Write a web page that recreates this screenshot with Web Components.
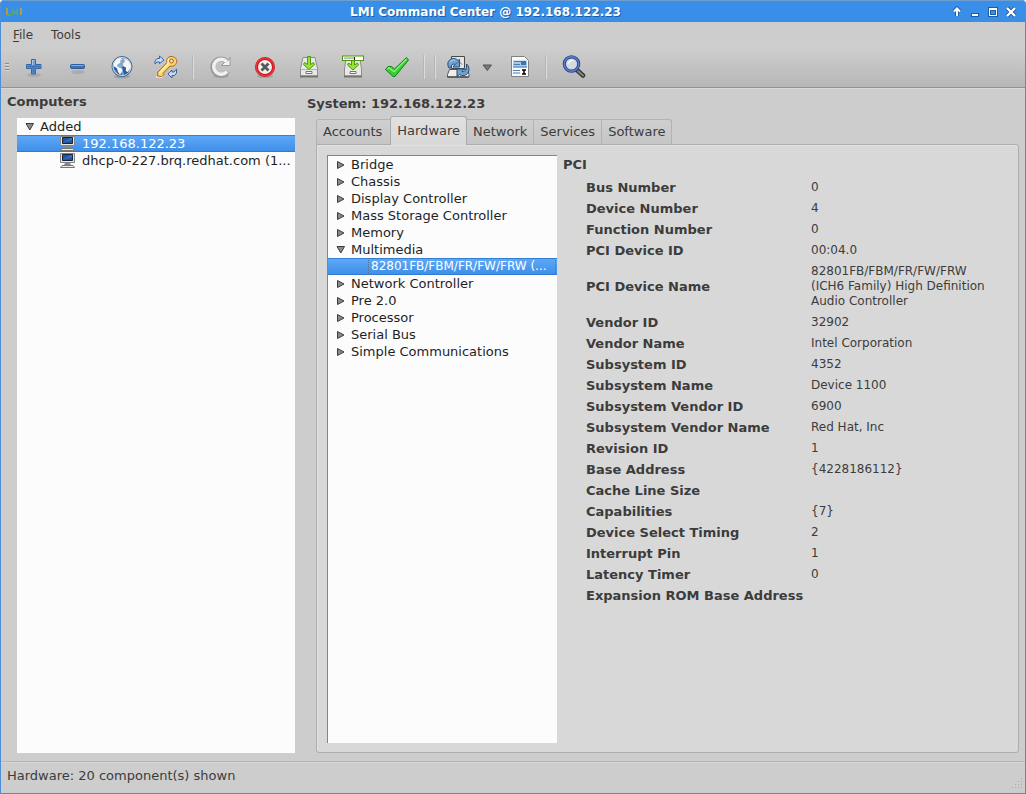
<!DOCTYPE html>
<html lang="en">
<head>
<meta charset="utf-8">
<title>LMI Command Center @ 192.168.122.23</title>
<style>
html, body { margin: 0; height: 100%; }
body { background: #fff; font: 13px/17px "DejaVu Sans", sans-serif; color: #3c3c3c; }
</style>
</head>
<body>
<lmi-window></lmi-window>

<template id="t-window">
<style>
:host { display: flex; flex-direction: column; height: 100vh; box-sizing: border-box; overflow: hidden; background: #cdcdcd; border: 1px solid #4c8fd8; border-top: 0; border-radius: 4px 4px 0 0; }
main { flex: 1; min-height: 0; display: flex; gap: 12px; padding: 0 6px 8px 6px; }
.side { flex: 0 0 288px; display: flex; flex-direction: column; }
.system { flex: 1; min-width: 0; display: flex; flex-direction: column; }
h1, h2 { margin: 0; font-size: 13px; line-height: 17px; font-weight: bold; }
.side h2 { padding: 5px 0 8px; }
.side tree-view { flex: 1; margin: 0 0 0 10px; }
h1 { padding: 7px 0 4px; }
</style>
<title-bar>LMI Command Center @ 192.168.122.23</title-bar>
<menu-bar></menu-bar>
<tool-bar></tool-bar>
<main>
<section class="side">
<h2>Computers</h2>
<tree-view aria-label="Computers">
<tree-row state="open">Added</tree-row>
<tree-row level="1" icon selected>192.168.122.23</tree-row>
<tree-row level="1" icon>dhcp-0-227.brq.redhat.com (1...</tree-row>
</tree-view>
</section>
<section class="system">
<h1>System: 192.168.122.23</h1>
<tab-panel></tab-panel>
</section>
</main>
<status-bar>Hardware: 20 component(s) shown</status-bar>
</template>

<template id="t-title">
<style>
:host { display: flex; align-items: center; flex: none; height: 22px; background: #398ee7; border-top: 1px solid #6f9fd0; box-sizing: border-box; padding: 0 5px 0 4px; }
.name { flex: 1; text-align: center; color: #fff; font-size: 12px; font-weight: bold; line-height: 22px; text-shadow: 1px 1px 0 #1c5da6; white-space: nowrap; overflow: hidden; }
svg { display: block; }
button { border: 0; padding: 0; margin: 0; background: none; width: 18px; height: 18px; display: grid; place-items: center; }
</style>
<svg width="18" height="10" viewBox="0 0 18 10" fill="none" stroke-width="2"><path d="M2 1v7" stroke="#b49a38"/><path d="M2 8h4M8 2v6" stroke="#58a874"/><path d="M8 3l2 3 2-3v5" stroke="#4aa2a0"/><path d="M16 1v7" stroke="#a8a04a"/></svg>
<span class="name"><slot></slot></span>
<button aria-label="Shade"><svg width="12" height="12" viewBox="0 0 12 12"><path d="M6 10V3M3 5.500l3-3 3 3" fill="none" stroke="#1c5da6" stroke-width="4"/><path d="M6 10V3M3 5.500l3-3 3 3" fill="none" stroke="#fff" stroke-width="2"/></svg></button>
<button aria-label="Minimize"><svg width="12" height="12" viewBox="0 0 12 12"><path d="M2 7h8v4H2z" fill="#1c5da6"/><path d="M3 8h6v2H3z" fill="#fff"/></svg></button>
<button aria-label="Maximize"><svg width="12" height="12" viewBox="0 0 12 12"><path d="M1 1h10v10H1z" fill="#1c5da6"/><path d="M2 2h8v8H2z" fill="#fff"/><path d="M3 4h6v5H3z" fill="#1c5da6"/><path d="M4 5h4v3H4z" fill="#398ee7"/></svg></button>
<button aria-label="Close"><svg width="12" height="12" viewBox="0 0 12 12"><path d="M2 2l8 8m0-8l-8 8" stroke="#1c5da6" stroke-width="4"/><path d="M2 2l8 8m0-8l-8 8" stroke="#fff" stroke-width="2.400"/></svg></button>
</template>

<template id="t-menu">
<style>
:host { display: flex; flex: none; height: 25px; padding: 0 5px; background: #cdcdcd; }
button { border: 0; background: none; font: inherit; font-size: 12px; color: inherit; padding: 1px 7px 0; margin: 0 4px 0 0; }
u { text-underline-offset: 2px; }
</style>
<button><u>F</u>ile</button>
<button>Tools</button>
</template>

<template id="t-toolbar">
<style>
:host { display: flex; flex: none; align-items: center; height: 41px; box-sizing: border-box; background: linear-gradient(#cecece, #b7b7b7); border-bottom: 1px solid #939393; box-shadow: 0 1px 0 #d8d8d8; }
.grip { width: 11px; flex: none; display: grid; place-items: center; }
.grip i { display: block; width: 4px; height: 9px; background: repeating-linear-gradient(#8b8b8b 0 1px, #d9d9d9 1px 2px, transparent 2px 3px); }
hr { flex: none; width: 1px; height: 24px; margin: 0 5px 0 4px; border: 0; border-right: 1px solid #dcdcdc; background: #b5b5b5; box-sizing: content-box; }
</style>
<span class="grip"><i></i></span>
<tool-button label="Add"><svg viewBox="0 0 24 24"><ellipse cx="12" cy="20" rx="7" ry="2" fill="#000" opacity=".1"/><path d="M9.500 4.500h4v5h5.500v4h-5.500v5.500h-4v-5.500H4.500v-4h5z" fill="#729fcf" stroke="#3465a4" stroke-linejoin="round"/><path d="M5.500 11.500h12.500M11.500 11v7" stroke="#3d72b5" stroke-width="2"/><path d="M10.500 10V5.500h2" fill="none" stroke="#a9c8ea"/></svg></tool-button>
<tool-button label="Remove"><svg viewBox="0 0 24 24"><ellipse cx="12" cy="17" rx="7" ry="2" fill="#000" opacity=".1"/><rect x="4.500" y="9.500" width="14" height="4" rx="1" fill="#3d72b5" stroke="#2f5f9f"/><path d="M5.500 10.500h12" stroke="#86afdf"/></svg></tool-button>
<tool-button label="Network"><svg viewBox="0 0 24 24"><ellipse cx="12" cy="21.500" rx="8" ry="2" fill="#000" opacity=".15"/><circle cx="12" cy="11.500" r="10" fill="#5d86b2" stroke="#47698f"/><circle cx="12" cy="11.500" r="9" fill="#88a9ca" stroke="#c9d8e8"/><path d="M4 12h6l2 8-4-1-4-5zM12 12l3-2 5 3-2 5-4 2z" fill="#2c5d97"/><path d="M3.500 9l3-5 4-1.500 1.500 2-2 1 .5 2-3 2-.5 2 3 1 2.500 2-1 3-1.500 2-2-2.500-1-3.500-2.500-2zM14 3.500l4 2 2.500 4 .3 3-2 3-1 1.500-2-1 .2-3.500-2.500-1-.5-3 2-2z" fill="#f4f6f5"/></svg></tool-button>
<tool-button label="Authentication"><svg viewBox="0 0 24 24"><path d="M3 20l-1.500 2.500 6 .5 3-3z" fill="#f2e3dc"/><path d="M17 1.500c4 0 6.500 3 5.500 6-1 3-4 4.500-6.500 3.500l-7 7.500 1 1-2.500 2-4-.5.500-4 9-9.500c-1-3 1-6 4-6z" fill="#fbd966" stroke="#b65b20" stroke-linejoin="round"/><path d="M14.500 4l-.5 5-9 9.500" fill="none" stroke="#fff0a0" stroke-width="1.500"/><circle cx="17.500" cy="6" r="2" fill="#ddd" stroke="#b65b20"/><path d="M1 9V6l2-2.500h2.500V1L10 5 5.500 8.500V7H3zM22.500 14v4l-2 2.500h-2.500V23l-4-4 4-4v2h2z" fill="#c9dcf2" stroke="#3c61a5" stroke-linejoin="round"/></svg></tool-button>
<hr>
<tool-button label="Refresh"><svg viewBox="0 0 24 24"><ellipse cx="12" cy="21" rx="8" ry="2" fill="#000" opacity=".12"/><path d="M18.500 16.500a8 8 0 1 1-1-10" fill="none" stroke="#999" stroke-width="5"/><path d="M21 2.500v8h-8.500l3-3 3-1z" fill="#f4f4f4" stroke="#999" stroke-linejoin="round"/><path d="M18 16.500a7.500 7.500 0 1 1 0-9.500" fill="none" stroke="#f1f1f1" stroke-width="3.500"/></svg></tool-button>
<tool-button label="Stop"><svg viewBox="0 0 24 24"><ellipse cx="12" cy="21" rx="8" ry="2" fill="#000" opacity=".14"/><circle cx="12" cy="12" r="8.500" fill="#f0f0ee" stroke="#c41219" stroke-width="3"/><circle cx="12" cy="12" r="8.800" fill="none" stroke="#ed353c" stroke-width="1.600"/><path d="M8.500 8.500l7 7m0-7l-7 7" stroke="#55595b" stroke-width="2.800"/></svg></tool-button>
<tool-button label="Install"><svg viewBox="0 0 24 24"><path d="M6 2.500h12l2.500 11v7.500H3.500v-7.500z" fill="#e8e8e6" stroke="#8c8e89" stroke-linejoin="round"/><path d="M4 14.500h16" stroke="#b4b4b0"/><path d="M9 16.500h6v2H9z" fill="#fff" stroke="#777"/><path d="M3 21.500h18" stroke="#747570" stroke-width="2"/><path d="M10.500 1.500h3v8l3-2 1 2-5.500 5-5.500-5 1-2 3 2z" fill="#9be03c" stroke="#4e9a06" stroke-linejoin="round"/></svg></tool-button>
<tool-button label="Update"><svg viewBox="0 0 24 24"><path d="M5 4h14l1.500 10v7H3.500v-7z" fill="#e8e8e6" stroke="#8c8e89"/><path d="M9 16.500h6v2H9z" fill="#fff" stroke="#777"/><path d="M3 21.500h18" stroke="#747570" stroke-width="2"/><path d="M10.500 5h3v5l3-2 1 2-5.500 5-5.500-5 1-2 3 2z" fill="#9be03c" stroke="#4e9a06"/><rect x="1.500" y="1" width="21" height="4.500" fill="#fff" stroke="#4e9a06"/><path d="M3 3.200h10" stroke="#bbb" stroke-width="2"/><path d="M13.500 2v3" stroke="#222"/></svg></tool-button>
<tool-button label="Apply"><svg viewBox="0 0 24 24"><path d="M3 11.500l-2.500 3L8 21.500h2L23.500 5l-2-2.500L9.500 14l-3-2.500z" fill="#38cf31" stroke="#14801a" stroke-linejoin="round"/><path d="M2.500 14L4 12.800l5 4L21.500 4" fill="none" stroke="#9af087" stroke-width="1.200"/></svg></tool-button>
<hr><hr>
<tool-button label="Switch computer" size="small"><svg viewBox="0 0 24 24"><path d="M5.500 1.500h13v12h-13z" fill="#e4e4e4" stroke="#484848"/><path d="M3.500 14.500h18l1.500 5v2.500H1.500v-2.500z" fill="#eeeeea" stroke="#555"/><path d="M1.500 22h21" stroke="#333"/><path d="M3 13C0 8 3 3.500 8 3.500c2 0 3 1 4 2l1.500-1V12H7l2-2.500c-2-1-4 0-4 3.500zM20.500 9c4 3 3 10-2 11.500-2 .5-4 0-5-1L11 21.500V14h7l-2 2.500c3 1 5-2 4.500-7.500z" fill="#6fa3d4" stroke="#254b73" stroke-linejoin="round"/><path d="M4 7.500c1-2 3-3 5-2.500" fill="none" stroke="#b9d5ee"/><path d="M9 9.500l4-3 3 3" stroke="#666" fill="none"/></svg></tool-button>
<tool-button label="Choose computer" size="arrow"><svg viewBox="0 0 24 24"><path d="M8 10h8.500l-4.200 5.500z" fill="#777" stroke="#555"/></svg></tool-button>
<tool-button label="View log" size="medium"><svg viewBox="0 0 24 24"><path d="M3.500 1.500h13l4 4v16h-17z" fill="#fafafa" stroke="#818181"/><path d="M5 5.500h14v7H5z" fill="#a9cae7"/><path d="M6 6.500h7M6 9.500h6M5 12h14M5 15.500h7M5 18h7" stroke="#487eb3"/><path d="M13 6h5v4h-5z" fill="#3e74ab"/><path d="M13 14h6v6h-6z" fill="#fff"/><path d="M14 15h4m-2 0v4m-2 0h4" stroke="#000" stroke-width="1.500"/></svg></tool-button>
<hr>
<tool-button label="Search"><svg viewBox="0 0 24 24"><path d="M15 15l6 5.500" stroke="#333" stroke-width="4.500" stroke-linecap="round"/><path d="M16 16l5 4.500" stroke="#85857b" stroke-width="2" stroke-linecap="round"/><circle cx="9.500" cy="9" r="7.200" fill="#d5d9e0" stroke="#2c4285" stroke-width="3.200"/><circle cx="9.500" cy="9" r="7.200" fill="none" stroke="#5d80cf" stroke-width="1.400"/><path d="M5.500 9c1-4 4-5 7-4-3 0-4 3-7 4z" fill="#fff"/></svg></tool-button>
</template>

<template id="t-tool">
<style>
:host { display: block; flex: 0 0 44px; }
:host([size="small"]) { flex-basis: 34px; }
:host([size="medium"]) { flex-basis: 42px; }
:host([size="arrow"]) { flex-basis: 22px; }
button { width: 100%; height: 36px; padding: 0; border: 0; background: none; display: grid; place-items: center; }
::slotted(svg) { display: block; width: 24px; height: 24px; fill: none; }
</style>
<button><slot></slot></button>
</template>

<template id="t-tree">
<style>:host { display: block; background: #fcfcfc; overflow: hidden; color: #1f1f1f; }</style>
<slot></slot>
</template>

<template id="t-row">
<style>
:host { display: flex; height: 17px; line-height: 17px; box-sizing: border-box; padding-left: 8px; align-items: center; white-space: nowrap; }
:host([level="1"]) { padding-left: 43px; font-size: 12px; }
:host([level="1"][icon]) { padding-left: 42px; font-size: 13px; }
:host([selected]) { color: #fff; background: linear-gradient(#60a9f8, #3d8ee8); box-shadow: inset 0 1px #3580d8, inset 0 -1px #2f7bd4; }
svg { display: none; flex: none; }
:host([state]) .arrow { display: block; margin-right: 5px; }
:host([icon]) .pc { display: block; margin-right: 6px; }
.open, :host([state="open"]) .closed { display: none; }
:host([state="open"]) .open { display: inline; }
:host([level="1"][selected]:not([icon])) .text { flex: 1; box-sizing: border-box; height: 17px; padding-left: 3px; margin: 0 1px 0 -3px; outline: 1px dotted #4a74a4; outline-offset: -1px; }
</style>
<svg class="arrow" width="10" height="10" viewBox="0 0 10 10" fill="#8a8a8a" stroke="#3c3c3c"><path class="closed" d="M1.500 1.500v7l6.500-3.500z"/><path class="open" d="M1 1.500h7.500L4.800 8z"/></svg>
<svg class="pc" width="17" height="17" viewBox="0 0 17 17"><path d="M1.500 1.500h14v9h-14z" fill="#e6e7e0" stroke="#85867f"/><path d="M3.500 2.500h10v6h-10z" fill="#2456a0" stroke="#17233f"/><path d="M4 7.500l8-4.500h1v2z" fill="#4474b8"/><path d="M6 11h5l1 2H5z" fill="#888"/><path d="M3 13.500h11l1.500 2h-14z" fill="#eee" stroke="#77786f"/></svg>
<span class="text"><slot></slot></span>
</template>

<template id="t-tabs">
<style>
:host { flex: 1; min-height: 0; display: flex; flex-direction: column; margin-left: 9px; }
.tabs { display: flex; align-items: flex-end; height: 28px; flex: none; }
button { font: inherit; color: inherit; box-sizing: border-box; height: 25px; padding: 0 6px 1px; margin: 0; border: 1px solid #b3b3b3; border-left-width: 0; border-bottom: 0; background: linear-gradient(#cfcfcf, #c5c5c5); white-space: nowrap; }
button:first-child { border-left-width: 1px; border-radius: 3px 0 0 0; padding: 0 8px 1px 6px; }
button:last-child { border-radius: 0 3px 0 0; }
button[aria-selected="true"] { height: 29px; border: 1px solid #a9a9a9; border-bottom: 0; border-radius: 3px 3px 0 0; background: linear-gradient(#e0e0e0, #d8d8d8); margin: 0 0 -1px -1px; padding: 0 6px 1px; position: relative; }
.body { flex: 1; min-height: 0; box-sizing: border-box; display: flex; gap: 6px; border: 1px solid #adadad; border-radius: 0 3px 3px 3px; background: #d8d8d8; padding: 10px 10px 9px 10px; box-shadow: inset 1px 1px #e2e2e2; }
tree-view { flex: 0 1 230px; box-sizing: border-box; border-left: 1px solid #858585; border-top: 1px solid #858585; }
property-list { flex: 1; min-width: 0; }
</style>
<div class="tabs" role="tablist">
<button role="tab">Accounts</button><button role="tab" aria-selected="true">Hardware</button><button role="tab">Network</button><button role="tab">Services</button><button role="tab">Software</button>
</div>
<div class="body" role="tabpanel">
<tree-view aria-label="Hardware">
<tree-row state="closed">Bridge</tree-row>
<tree-row state="closed">Chassis</tree-row>
<tree-row state="closed">Display Controller</tree-row>
<tree-row state="closed">Mass Storage Controller</tree-row>
<tree-row state="closed">Memory</tree-row>
<tree-row state="open">Multimedia</tree-row>
<tree-row level="1" selected>82801FB/FBM/FR/FW/FRW (...</tree-row>
<tree-row state="closed">Network Controller</tree-row>
<tree-row state="closed">Pre 2.0</tree-row>
<tree-row state="closed">Processor</tree-row>
<tree-row state="closed">Serial Bus</tree-row>
<tree-row state="closed">Simple Communications</tree-row>
</tree-view>
<property-list></property-list>
</div>
</template>

<template id="t-props">
<style>
:host { display: block; }
h2 { margin: 0; font-size: 13px; line-height: 17px; padding: 1px 0 4px; }
table { border-collapse: collapse; width: 100%; }
th, td { padding: 3px 0; line-height: 15px; text-align: left; vertical-align: middle; }
th { width: 225px; padding-left: 23px; white-space: nowrap; font-weight: bold; }
td { font-size: 12px; padding-right: 10px; }
</style>
<h2>PCI</h2>
<table><tbody></tbody></table>
</template>

<template id="t-status">
<style>
:host { display: flex; flex: none; justify-content: space-between; height: 32px; box-sizing: border-box; border-top: 1px solid #b5b5b5; box-shadow: inset 0 1px #d6d6d6; padding: 5px 2px 0 6px; }
svg { align-self: flex-end; margin-bottom: 4px; }
</style>
<span><slot></slot></span>
<svg width="12" height="12" viewBox="0 0 12 12" fill="#aaa"><path d="M10 1h1v1h-1zM7 4h1v1H7zM10 4h1v1h-1zM4 7h1v1H4zM7 7h1v1H7zM10 7h1v1h-1zM1 10h1v1H1zM4 10h1v1H4zM7 10h1v1H7zM10 10h1v1h-1z"/></svg>
</template>

<script>
class TemplateElement extends HTMLElement {
  constructor() {
    super();
    this.attachShadow({ mode: "open" })
      .append(document.getElementById(this.constructor.template).content.cloneNode(true));
  }
}
const define = (name, template) =>
  customElements.define(name, class extends TemplateElement { static template = template; });

customElements.define("property-list", class extends TemplateElement {
  static template = "t-props";
  connectedCallback() {
    const rows = [
      ["Bus Number", "0"], ["Device Number", "4"], ["Function Number", "0"],
      ["PCI Device ID", "00:04.0"],
      ["PCI Device Name", "82801FB/FBM/FR/FW/FRW (ICH6 Family) High Definition Audio Controller"],
      ["Vendor ID", "32902"], ["Vendor Name", "Intel Corporation"],
      ["Subsystem ID", "4352"], ["Subsystem Name", "Device 1100"],
      ["Subsystem Vendor ID", "6900"], ["Subsystem Vendor Name", "Red Hat, Inc"],
      ["Revision ID", "1"], ["Base Address", "{4228186112}"], ["Cache Line Size", ""],
      ["Capabilities", "{7}"], ["Device Select Timing", "2"], ["Interrupt Pin", "1"],
      ["Latency Timer", "0"], ["Expansion ROM Base Address", ""]
    ];
    const body = this.shadowRoot.querySelector("tbody");
    body.replaceChildren();
    for (const [name, value] of rows) {
      const tr = body.insertRow();
      const th = document.createElement("th");
      th.scope = "row";
      th.textContent = name;
      tr.append(th);
      tr.insertCell().textContent = value;
    }
  }
});
customElements.define("tool-button", class extends TemplateElement {
  static template = "t-tool";
  connectedCallback() {
    this.shadowRoot.querySelector("button").setAttribute("aria-label", this.getAttribute("label"));
  }
});
define("tree-row", "t-row");
define("tree-view", "t-tree");
define("tab-panel", "t-tabs");
define("title-bar", "t-title");
define("menu-bar", "t-menu");
define("tool-bar", "t-toolbar");
define("status-bar", "t-status");
define("lmi-window", "t-window");
</script>
</body>
</html>
